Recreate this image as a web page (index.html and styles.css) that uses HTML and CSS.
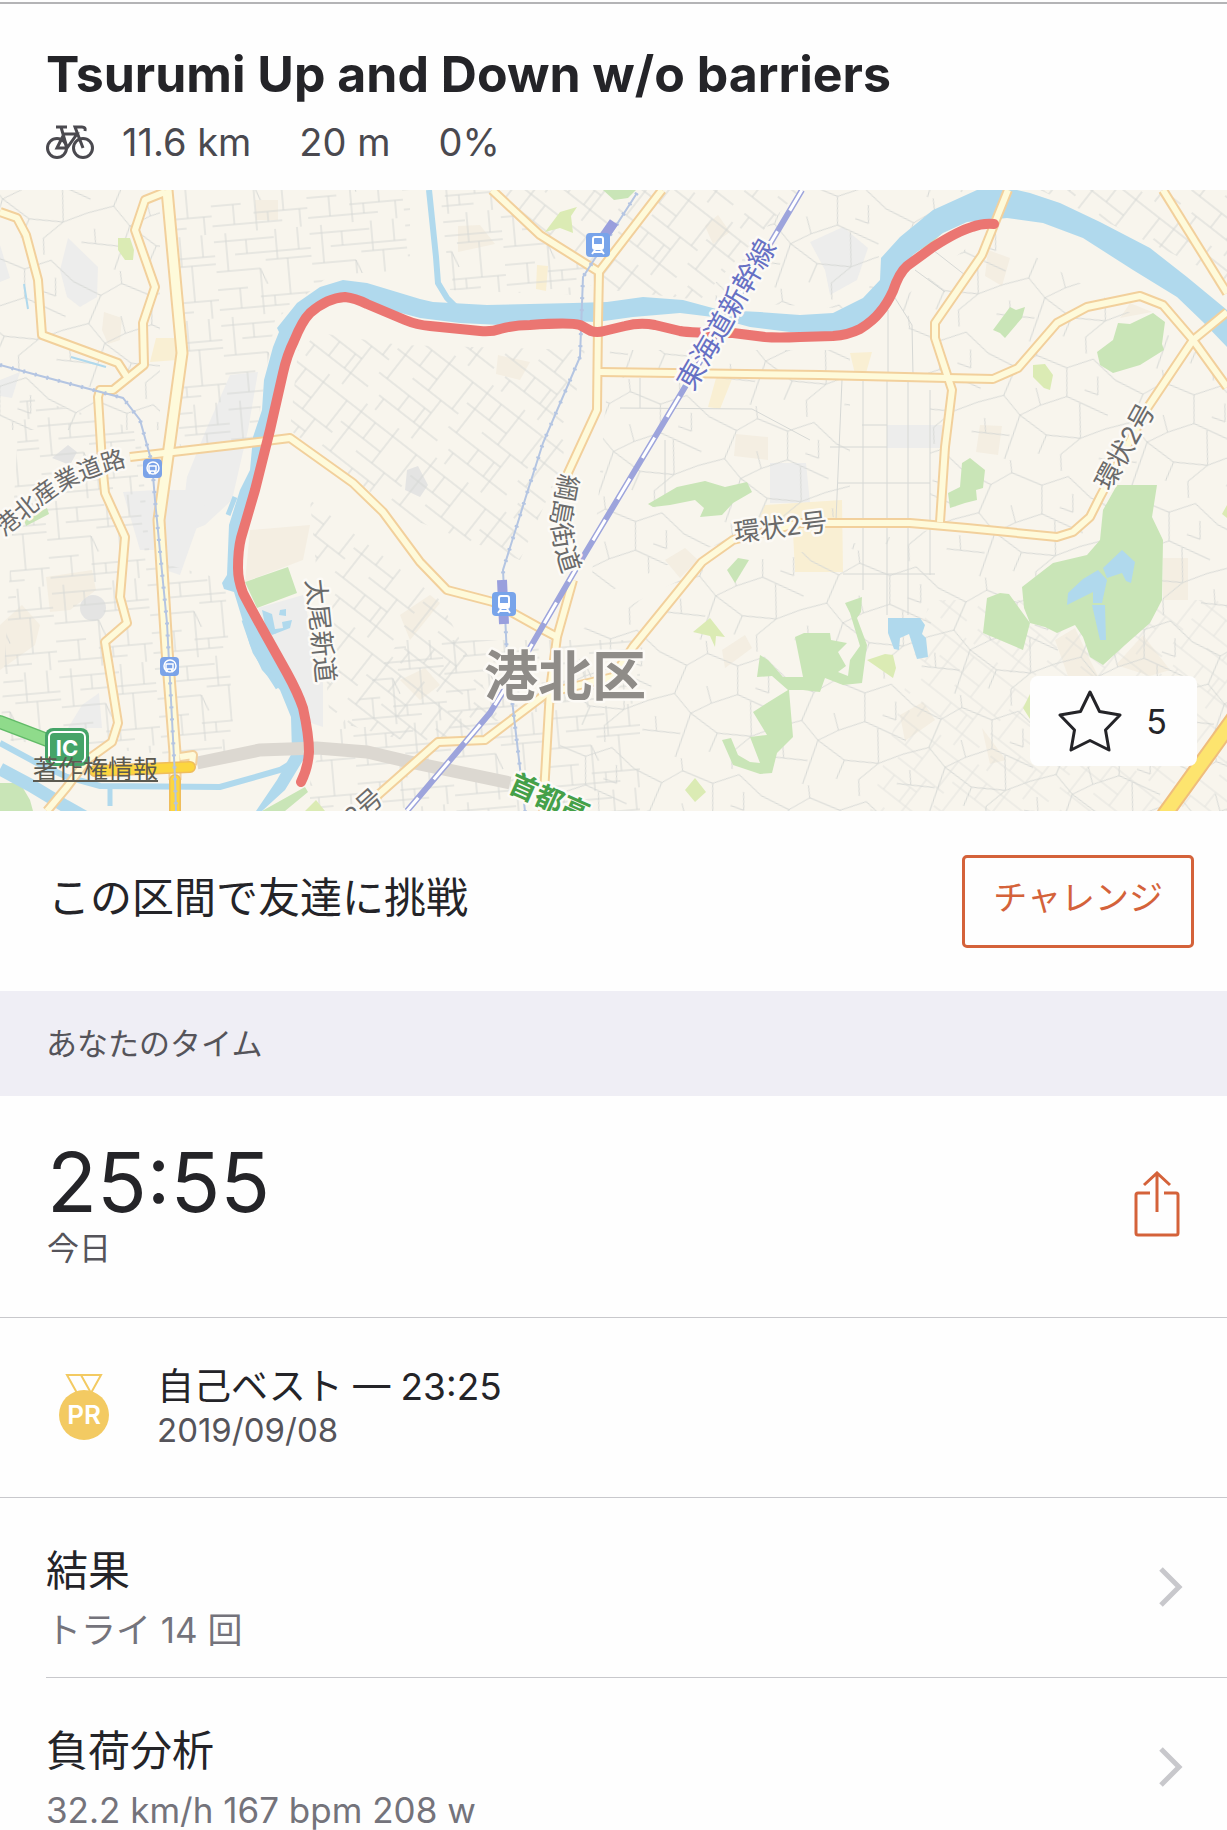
FILE: index.html
```html
<!DOCTYPE html>
<html lang="ja">
<head>
    <meta charset="UTF-8">
    <meta name="viewport" content="width=device-width, initial-scale=1">
    <title>Tsurumi Up and Down w/o barriers</title>
    <link rel="stylesheet" href="styles.css">
</head>
<body>
    <header class="segment-header">
        <h1>Tsurumi Up and Down w/o barriers</h1>
        <div class="stats">
            <svg class="bike-icon" viewBox="0 0 48 34" aria-hidden="true">
                <circle cx="11" cy="23" r="9.5"/>
                <circle cx="37" cy="23" r="9.5"/>
                <path d="M11 23 L18 9 H31 L21 23 Z M21 23 L15 2 M10 2 H21 M37 23 L29 2 H36 Q40 2 39 6"/>
            </svg>
            <span>11.6 km</span>
            <span>20 m</span>
            <span>0%</span>
        </div>
    </header>

    <div class="map">
        <svg class="map-canvas" viewBox="0 190 1227 621" preserveAspectRatio="xMidYMid slice" role="img" aria-label="区間の地図">
            <defs>
                <!-- 細い道路の模様 -->
                <pattern id="blocks" width="96" height="84" patternUnits="userSpaceOnUse" patternTransform="rotate(-5)">
                    <path class="street" d="M0 8 H60 M20 22 H96 M0 38 H44 L50 54 M50 30 H96 M0 56 H30 M42 66 H96 M0 76 H70 M12 0 V38 M32 8 V22 M44 38 V84 M62 0 V30 M72 30 V66 M84 0 V22 M88 66 V84 M22 56 V76 M56 66 V76"/>
                </pattern>
                <pattern id="slant" width="88" height="92" patternUnits="userSpaceOnUse" patternTransform="rotate(38)">
                    <path class="street" d="M0 10 H88 M0 30 H50 M30 44 H88 M0 60 H66 M14 78 H88 M10 0 V60 M28 10 V30 M50 0 V44 M66 44 V92 M80 10 V44 M38 60 V78 M20 78 V92 M58 60 V78"/>
                </pattern>
                <pattern id="hills" width="130" height="120" patternUnits="userSpaceOnUse" patternTransform="rotate(12)">
                    <path class="street" d="M0 20 L30 28 L48 12 L80 18 L104 4 L130 20 M30 28 L24 58 L44 74 L38 120 M0 70 L24 58 M80 18 L86 46 L62 60 L44 74 M86 46 L130 56 M100 50 L108 84 L92 104 L96 120 M44 74 L74 88 L108 84 M108 84 L130 70 M74 88 L70 108 M0 100 L38 96 M48 12 L44 0 M62 60 L54 44 M10 84 L14 98 M112 20 L116 38 L102 36"/>
                </pattern>
                <g id="train">
                    <rect width="24" height="24" rx="4" fill="#78a4ea"/>
                    <rect x="7" y="4" width="10" height="12" rx="2" fill="none" stroke="#fff" stroke-width="2"/>
                    <path d="M7 11 H17 V15 H7 Z" fill="#fff"/>
                    <path d="M6 21 L9 17 M18 21 L15 17 M8 19 H16" stroke="#fff" stroke-width="2" fill="none"/>
                </g>
                <g id="metro">
                    <rect width="19" height="19" rx="4" fill="#7ba3e8"/>
                    <circle cx="10" cy="9" r="6" fill="none" stroke="#fff" stroke-width="1.5"/>
                    <path d="M6 7 H13 V12 H6 Z M6 15 L8 12 M13 15 L11 12" stroke="#fff" stroke-width="1.5" fill="none"/>
                </g>
            </defs>

            <rect y="190" width="1227" height="621" fill="#f8f5ed"/>

            <g fill="#ededec">
                <path d="M68 238 L98 267 97 297 80 307 67 297 60 270Z"/>
                <path d="M0 245 L10 278 0 282Z M0 380 L20 372 12 398 0 396Z"/>
                <path d="M230 375 L258 372 248 430 232 500 205 525 180 535 187 477 206 430Z"/>
                <path d="M123 492 L156 490 154 550 140 550Z M164 490 H210 L180 575 165 570Z"/>
                <path d="M258 608 L303 595 323 683 323 727 308 722Z"/>
                <path d="M810 242 L843 227 868 248 857 280 830 295 825 270Z"/>
                <path d="M887 425 H942 V448 H887Z M770 463 H806 L810 503 H770Z"/>
                <path d="M82 705 L99 693 102 728 68 728Z"/>
            </g>
            <g fill="#e4e4e3">
                <circle cx="93" cy="608" r="13"/>
                <path d="M407 470 L418 466 428 485 420 497 405 490Z M52 458 L68 445 77 452 70 465Z"/>
            </g>
            <g fill="#f4eee2">
                <path d="M255 200 H278 V220 H256Z M104 312 L122 318 120 340 108 344 102 330Z"/>
                <path d="M458 226 L480 225 495 244 458 252Z M705 226 L718 215 730 232 713 244Z"/>
                <path d="M498 355 L530 362 520 380 496 374Z M736 434 L768 437 V460 L734 456Z"/>
                <path d="M988 250 L1010 258 1002 286 985 276Z M1120 318 L1130 303 1152 312Z"/>
                <path d="M980 425 L1002 426 998 455 976 452Z M250 530 L310 525 303 560 245 582Z"/>
                <path d="M46 577 L92 570 96 590 70 610 50 612Z M0 625 L22 605 40 625 35 645 0 670Z"/>
                <path d="M400 615 L430 595 440 603 410 640Z M400 680 L425 668 440 685 420 700Z"/>
                <path d="M665 560 L685 548 698 560 680 578Z M722 650 L745 635 752 648 725 668Z"/>
                <path d="M1055 640 L1075 628 1090 660 1098 676 1068 676Z M1116 665 L1143 635 1170 670 1150 676Z"/>
                <path d="M900 715 L923 702 935 720 905 741Z M982 728 L1006 760 990 764Z M1163 558 H1188 V600 H1163Z"/>
            </g>
            <path fill="#f9efd3" d="M156 338 H177 V360 L150 362Z M537 265 L548 266 546 291 536 289Z M716 378 L732 379 720 409 708 407Z M850 353 L872 352 866 373 855 374Z M765 505 L842 500 843 572 795 572 793 532 755 528Z"/>

            <g>
                <path fill="url(#blocks)" d="M170 190 H410 V270 L330 275 275 320 255 440 180 450Z"/>
                <path fill="url(#blocks)" d="M20 395 L140 430 150 560 225 580 235 760 0 740Z"/>
                <path fill="url(#slant)" d="M300 330 L400 345 585 350 560 470 520 560 400 515 290 430Z"/>
                <path fill="url(#slant)" d="M310 500 L440 600 500 720 420 745 330 720Z"/>
                <path fill="url(#hills)" d="M0 190 H160 V430 H0Z"/>
                <path fill="url(#blocks)" d="M440 190 L490 190 600 280 575 295 450 290Z"/>
                <path fill="url(#slant)" d="M490 190 H800 L700 300 610 290Z"/>
                <path fill="url(#hills)" d="M800 190 H970 L880 250 870 310 700 300Z"/>
                <path fill="url(#hills)" d="M610 350 L850 350 850 520 820 515 700 550 590 600Z"/>
                <path fill="url(#hills)" d="M900 300 L990 230 1227 370 V811 H560 V640 L700 570 930 530 930 400Z"/>
                <path fill="url(#slant)" d="M930 600 H1227 V811 H870Z" opacity=".6"/>
                <path fill="url(#slant)" d="M1040 190 H1227 V280Z"/>
                <path fill="url(#blocks)" d="M400 640 H640 V811 H310 V770Z"/>
            </g>
            <path class="street" d="M842 380 L836 520 M863 380 V590 M887 375 V615 M908 380 V615 M930 390 V575 M862 425 H887 M830 447 H887 M838 483 H930 M843 574 H935 M620 408 L752 409 810 440 M640 378 V408 M665 440 V500 M890 290 L912 325 913 375 M915 270 L945 292 M933 250 L965 275 M888 310 V372"/>

            <g class="park">
                <path d="M1118 323 L1130 324 1153 313 1165 322 1162 344 1164 350 1140 365 1113 373 1100 365 1097 352 1113 340Z"/>
                <path d="M1010 307 L1016 310 1025 307 1022 318 1005 338 1000 333 993 330Z"/>
                <path d="M970 458 L985 470 983 488 976 490 977 500 965 503 950 508 948 493 960 487 962 463Z"/>
                <path d="M1117 485 H1157 L1152 517 1163 540 1162 600 1150 623 1125 645 1103 665 1090 657 1083 637 1075 625 1057 633 1045 627 1030 623 1024 608 1022 587 1053 563 1087 555 1100 540 1103 510Z"/>
                <path d="M987 598 L1000 593 1009 594 1030 623 1023 650 995 638 983 633Z"/>
                <path d="M648 504 L677 487 705 481 725 487 747 482 752 492 733 503 722 515 700 517 704 508 695 500 670 505 653 507Z"/>
                <path d="M738 558 L749 560 735 583 727 570Z"/>
                <path d="M795 637 L804 633 830 633 831 640 847 643 838 652 846 666 838 672 848 676 850 660 860 646 850 613 845 603 862 597 861 612 857 618 867 645 862 683 843 685 825 678 820 692 803 690 789 690 793 737 777 753 772 773 760 774 733 765 722 740 731 738 738 755 750 762 760 763 750 737 767 735 753 712 767 703 788 690 772 676 757 677 760 655 768 660 783 677 803 677Z"/>
                <path d="M603 190 H636 L628 198 614 200Z M245 582 L288 567 297 593 257 608Z"/>
                <path d="M305 787 L308 792 285 811 262 811Z M0 783 H20 L30 800 33 811 H0Z M24 520 L47 508 49 514 26 526Z M913 253 L930 238 942 233 930 245Z"/>
            </g>
            <path class="meadow" d="M118 238 H130 L134 250 133 260 H125 L118 250Z M545 232 L560 212 577 207 571 216 573 233 560 228Z M1033 365 L1045 364 1053 375 1050 390 1044 388 1033 377Z M710 618 L725 637 716 636 715 647 710 636 693 632Z M695 778 L706 792 695 802 685 790Z M867 660 L885 654 893 655 896 668 893 678Z M1032 690 L1023 708 1030 719Z M1227 505 L1222 514 1227 518Z M316 800 L325 811 305 811Z"/>

            <!-- 川と池 -->
            <g class="water">
                <path d="M977 190 H1017 L1030 193 1060 203 1100 222 1150 248 1187 277 1227 310 V347 L1203 322 1177 297 1133 270 1083 238 1043 223 1007 218 967 222 943 233 913 255 900 273 887 303 867 323 843 333 790 332 750 327 713 317 680 313 633 317 597 322 533 320 500 325 460 323 420 318 367 304 347 296 325 301 307 318 292 343 280 380 268 430 253 490 240 540 239 570 245 596 265 633 287 673 302 707 305 757 285 790 262 811 H256 L277 780 292 753 291 717 280 690 262 670 250 645 241 615 234 592 224 589 222 583 227 575 229 525 240 490 250 470 253 437 262 410 264 380 273 347 279 332 277 328 297 303 320 287 343 280 367 283 420 299 433 302 487 305 573 303 607 302 643 297 683 300 720 310 760 312 800 315 833 313 863 298 880 280 881 258 900 237 933 210Z"/>
                <path d="M1122 550 L1135 562 1131 583 1126 581 1122 573 1107 578 1103 568Z M1098 570 L1107 580 1102 603 H1093 V592 L1067 605 1068 593 1083 579Z M1092 605 H1105 L1106 640 H1100Z"/>
                <path d="M888 618 H920 L925 625 922 634 926 638 928 657 917 659 909 634 900 638 899 650 894 649 888 633Z"/>
                <path d="M262 610 L272 614 276 634 266 630Z M280 610 L286 609 286 616 279 615Z M282 622 L292 620 290 628 272 635 268 630 283 628Z"/>
            </g>
            <g class="stream">
                <path stroke-width="6" d="M429 190 L436 257 438 283 447 298 460 311"/>
                <path stroke-width="6" d="M0 743 L35 762 67 777 100 786 220 787 280 770 300 758"/>
                <path stroke-width="13" d="M0 769 L30 785 65 806 90 820"/>
                <path stroke-width="5" d="M110 787 V806 M228 515 L235 497 M244 620 L255 652 278 688"/>
                <path stroke-width="2" d="M24 284 L28 309 M71 357 L106 367"/>
            </g>

            <path class="covered" d="M197 763 L260 750 317 748 367 752 410 762 510 783"/>

            <!-- 幹線道路 -->
            <g class="road-case">
                <path d="M0 212 L17 218 26 235 38 280 42 335 118 363 127 377"/>
                <path d="M165 192 L145 200 135 230 155 287 143 323 144 365 113 390 100 390 98 397 102 463 105 493 125 537 120 597 127 623 105 642 118 723 112 742 87 760 67 787 47 811"/>
                <path d="M130 457 L233 445 290 438 353 483 383 512 420 562 447 590 493 602 540 628 557 637"/>
                <path d="M492 190 L540 235 599 272 662 190 M599 272 L598 323 597 410 567 475"/>
                <path d="M573 580 L557 637 550 690 543 811"/>
                <path d="M600 372 L820 375 947 378 993 379 1018 368 1057 323 1087 307 1140 296 1163 305 1193 340 1227 387"/>
                <path d="M1008 190 L982 255 935 323 935 338 952 390 945 447 940 522"/>
                <path d="M1163 190 L1227 293"/>
                <path d="M1227 312 L1193 340 1148 407 1100 497 1090 517 1073 532 1057 537 967 528 910 523 800 523 733 540 702 562 633 647 613 677 547 693 485 740 438 742 360 811"/>
                <path class="wide" d="M167 190 L182 353 167 463 159 520 167 650 175 753 V780"/>
                <path d="M180 757 L193 755 192 765"/>
            </g>
            <g class="road-fill">
                <path d="M0 212 L17 218 26 235 38 280 42 335 118 363 127 377"/>
                <path d="M165 192 L145 200 135 230 155 287 143 323 144 365 113 390 100 390 98 397 102 463 105 493 125 537 120 597 127 623 105 642 118 723 112 742 87 760 67 787 47 811"/>
                <path d="M130 457 L233 445 290 438 353 483 383 512 420 562 447 590 493 602 540 628 557 637"/>
                <path d="M492 190 L540 235 599 272 662 190 M599 272 L598 323 597 410 567 475"/>
                <path d="M573 580 L557 637 550 690 543 811"/>
                <path d="M600 372 L820 375 947 378 993 379 1018 368 1057 323 1087 307 1140 296 1163 305 1193 340 1227 387"/>
                <path d="M1008 190 L982 255 935 323 935 338 952 390 945 447 940 522"/>
                <path d="M1163 190 L1227 293"/>
                <path d="M1227 312 L1193 340 1148 407 1100 497 1090 517 1073 532 1057 537 967 528 910 523 800 523 733 540 702 562 633 647 613 677 547 693 485 740 438 742 360 811"/>
                <path class="wide" d="M167 190 L182 353 167 463 159 520 167 650 175 753 V780"/>
                <path d="M180 757 L193 755 192 765"/>
            </g>
            <g fill="none" stroke-linecap="round">
                <path d="M1235 717 L1165 814" stroke="#efbd7c" stroke-width="17"/>
                <path d="M1235 717 L1165 814" stroke="#fde46e" stroke-width="13"/>
                <path d="M95 771 L190 767 M175 780 V815" stroke="#efbd5c" stroke-width="12"/>
                <path d="M95 771 L190 767 M175 780 V815" stroke="#fcd63f" stroke-width="9"/>
                <path d="M0 722 L55 743" stroke="#62bb68" stroke-width="14"/>
                <path d="M0 722 L55 743" stroke="#8fdb8b" stroke-width="11"/>
            </g>

            <!-- 鉄道 -->
            <g class="rail">
                <path d="M0 365 L37 375 123 398 140 420 152 463 155 500 167 623 175 777 176 811"/>
                <path d="M637 193 L583 277 580 357 543 443 528 490 503 570 507 657 525 811"/>
            </g>
            <g class="rail-ties">
                <path d="M0 365 L37 375 123 398 140 420 152 463 155 500 167 623 175 777 176 811"/>
                <path d="M637 193 L583 277 580 357 543 443 528 490 503 570 507 657 525 811"/>
            </g>
            <path d="M614 222 L600 242 M502 580 L504 624" stroke="#999fdd" stroke-width="10" fill="none"/>
            <path class="shinkansen" d="M802 190 L685 387 622 492 580 562 527 653 490 713 407 811"/>
            <path class="shinkansen-dash" d="M802 190 L685 387 622 492 580 562 527 653 490 713 407 811"/>

            <path class="route" d="M301 782 Q308 768 309 752 Q309 735 303 708 Q298 693 287 673 L263 630 Q248 603 243 593 Q238 580 238 568 Q238 550 241 538 L255 490 270 430 283 373 Q287 355 294 341 Q302 321 310 313 Q327 298 345 297 Q355 298 367 304 L405 320 Q417 325 430 326 L480 331 Q492 332 500 329 Q515 325 530 325 Q570 322 580 325 L591 331 Q597 333 604 331 L625 326 Q640 322 655 325 L680 331 Q690 333 733 333 L765 337 Q777 338 800 337 L833 336 Q848 335 860 329 Q873 321 880 312 Q887 304 893 291 Q899 273 907 266 L933 247 Q958 231 972 227 Q982 223 994 224"/>

            <use href="#metro" x="143" y="459"/>
            <use href="#metro" x="160" y="657"/>
            <use href="#train" x="586" y="233"/>
            <use href="#train" x="492" y="592"/>

            <g class="ic">
                <rect x="45" y="728" width="44" height="38" rx="8" fill="#45a468"/>
                <rect x="49" y="732" width="36" height="30" rx="5" fill="none" stroke="#fff" stroke-width="2"/>
                <text x="67" y="756" text-anchor="middle">IC</text>
            </g>

            <path id="kohoku-road" d="M4 537 L50 499 Q80 477 134 464" fill="none"/>
            <path id="tsunashima-road" d="M560 473 L552 515 Q551 548 571 592" fill="none"/>
            <g class="label">
                <text class="small"><textPath href="#kohoku-road">港北産業道路</textPath></text>
                <text><textPath href="#tsunashima-road">綱島街道</textPath></text>
                <text transform="translate(1110 492) rotate(-61)">環状2号</text>
                <text transform="translate(735 542) rotate(-7)">環状2号</text>
                <text transform="translate(306 580) rotate(84)">太尾新道</text>
                <text transform="translate(354 828) rotate(-42)">2号</text>
            </g>
            <text class="label rail-label" transform="translate(693 392) rotate(-60)">東海道新幹線</text>
            <text class="label highway-label" transform="translate(507 791) rotate(24)">首都高</text>
            <text class="label ward-label" x="565" y="696" text-anchor="middle">港北区</text>
        </svg>
        <a class="copyright" href="#copyright">著作権情報</a>
        <button class="favorite" type="button" aria-label="お気に入り 5">
            <svg class="star-icon" viewBox="0 0 64 62" aria-hidden="true">
                <path d="M32 2 L41.500 21.500 L62 25 L47.500 40 L51 60 L32 50.500 L13 60 L16.500 40 L2 25 L22.500 21.500 Z"/>
            </svg>
            <span>5</span>
        </button>
    </div>

    <section class="challenge">
        <p>この区間で友達に挑戦</p>
        <button class="challenge-button" type="button">チャレンジ</button>
    </section>

    <h2 class="section-title">あなたのタイム</h2>

    <section class="time-row">
        <div>
            <p class="time">25:55</p>
            <p class="day">今日</p>
        </div>
        <button class="share" type="button" aria-label="共有">
            <svg viewBox="0 0 46 66" aria-hidden="true">
                <path d="M16 22 H4 Q2 22 2 24 V62 Q2 64 4 64 H42 Q44 64 44 62 V24 Q44 22 42 22 H30 M23 41 V3 M10 14 L23 2 L36 14"/>
            </svg>
        </button>
    </section>

    <section class="best-row">
        <svg class="medal" viewBox="0 0 50 68" aria-hidden="true">
            <path d="M8 2 H42 L32 20 H18 Z M22 2 L32 20" fill="none" stroke="#f3ca62" stroke-width="2"/>
            <circle cx="25" cy="42" r="25" fill="#f3ca62"/>
            <text x="25" y="51" text-anchor="middle">PR</text>
        </svg>
        <div>
            <p class="best">自己ベスト — 23:25</p>
            <p class="date">2019/09/08</p>
        </div>
    </section>

    <nav class="links">
        <a href="#results">
            <span class="link-text">
                <span class="link-title">結果</span>
                <span class="link-sub">トライ 14 回</span>
            </span>
            <svg class="chevron" viewBox="0 0 24 40" aria-hidden="true"><path d="M2 2 L20 20 L2 38"/></svg>
        </a>
        <a href="#effort">
            <span class="link-text">
                <span class="link-title">負荷分析</span>
                <span class="link-sub">32.2 km/h 167 bpm 208 w</span>
            </span>
            <svg class="chevron" viewBox="0 0 24 40" aria-hidden="true"><path d="M2 2 L20 20 L2 38"/></svg>
        </a>
    </nav>
</body>
</html>
```
FILE: styles.css
```css
* {
    box-sizing: border-box;
}
body {
    margin: 0;
    background-color: #fefefe;
    color: #242428;
    font-family: Inter, "Noto Sans CJK JP", sans-serif;
    font-weight: 400;
}
p, h1, h2 {
    margin: 0;
}
button {
    font: inherit;
    cursor: pointer;
}
svg {
    display: block;
}

/* ヘッダー */
.segment-header {
    margin-top: 2px;
    border-top: 2px solid #b4b4b6;
    padding: 40px 46px 24px;
}
h1 {
    font-size: 50px;
    line-height: 60px;
    font-weight: 700;
}
.stats {
    display: flex;
    align-items: center;
    gap: 48px;
    margin-top: 14px;
    font-size: 38px;
    line-height: 48px;
    color: #4a494f;
}
.bike-icon {
    width: 48px;
    height: 34px;
    margin-right: -20px;
    fill: none;
    stroke: #4a494f;
    stroke-width: 3;
}

/* 地図 */
.map {
    position: relative;
    height: 621px;
    overflow: hidden;
}
.map-canvas {
    width: 100%;
    height: 100%;
}
.street {
    fill: none;
    stroke: #d6d8d5;
    stroke-width: 1;
}
.park {
    fill: #c9e5b7;
}
.meadow {
    fill: #dbebb4;
}
.water {
    fill: #b0d9ed;
}
.stream {
    fill: none;
    stroke: #b0d9ed;
}
.covered {
    fill: none;
    stroke: #dcd8d1;
    stroke-width: 13;
}
.road-case, .road-fill {
    fill: none;
    stroke-linejoin: round;
}
.road-case {
    stroke: #f2d09c;
    stroke-width: 10;
}
.road-fill {
    stroke: #fefada;
    stroke-width: 6;
}
.road-case .wide {
    stroke-width: 13;
}
.road-fill .wide {
    stroke-width: 9;
}
.rail, .rail-ties {
    fill: none;
    stroke: #b4c5e2;
    stroke-width: 2;
}
.rail-ties {
    stroke-width: 4;
    stroke-dasharray: 2 10;
}
.shinkansen {
    fill: none;
    stroke: #9da4dc;
    stroke-width: 6;
}
.shinkansen-dash {
    fill: none;
    stroke: #fff;
    stroke-width: 3;
    stroke-dasharray: 24 24;
}
.route {
    fill: none;
    stroke: #eb7672;
    stroke-width: 10;
    stroke-linecap: round;
    stroke-linejoin: round;
}
.ic text {
    font-size: 22px;
    font-weight: 700;
    fill: #fff;
}
.label {
    font-size: 26px;
    fill: #6a6a6a;
    stroke: #fcfaf6;
    stroke-width: 5;
    stroke-linejoin: round;
    paint-order: stroke;
}
.label .small {
    font-size: 24px;
}
.rail-label {
    font-size: 28px;
    fill: #6670c4;
}
.highway-label {
    font-size: 28px;
    font-weight: 700;
    fill: #45a049;
}
.ward-label {
    font-size: 54px;
    font-weight: 700;
    fill: #8f8c88;
}
.copyright {
    position: absolute;
    left: 33px;
    bottom: 24px;
    font-size: 25px;
    line-height: 36px;
    color: #5c5a50;
}
.favorite {
    position: absolute;
    right: 30px;
    bottom: 45px;
    display: flex;
    align-items: center;
    gap: 24px;
    height: 90px;
    padding: 0 30px 0 28px;
    border: none;
    border-radius: 8px;
    background-color: #fefefe;
    color: #242428;
    font-size: 34px;
}
.star-icon {
    width: 64px;
    height: 62px;
    fill: none;
    stroke: #242428;
    stroke-width: 3;
    stroke-linejoin: round;
}

/* チャレンジ */
.challenge {
    display: flex;
    align-items: center;
    justify-content: space-between;
    height: 180px;
    padding: 0 33px 0 48px;
    font-size: 42px;
    line-height: 56px;
}
.challenge p {
    padding-bottom: 6px;
}
.challenge-button {
    height: 93px;
    padding: 0 28px 6px;
    border: 3px solid #d4623a;
    border-radius: 5px;
    background-color: #fefefe;
    color: #d4623a;
    font-size: 34px;
}
.section-title {
    padding: 0 46px;
    background-color: #efeef5;
    color: #55545a;
    font-size: 31px;
    line-height: 105px;
    font-weight: 400;
}

/* タイム */
.time-row {
    display: flex;
    align-items: center;
    justify-content: space-between;
    height: 222px;
    padding: 0 47px 6px;
    border-bottom: 1px solid #c8c8cc;
}
.time {
    font-size: 82px;
    line-height: 90px;
}
.day {
    font-size: 32px;
    line-height: 42px;
    color: #55545a;
}
.share {
    padding: 0;
    border: none;
    background: none;
}
.share svg {
    width: 46px;
    height: 66px;
    fill: none;
    stroke: #d4623a;
    stroke-width: 3;
}
.best-row {
    display: flex;
    align-items: center;
    gap: 48px;
    height: 180px;
    padding: 0 59px 2px;
    border-bottom: 1px solid #c8c8cc;
}
.medal {
    width: 50px;
    height: 68px;
}
.medal text {
    font-size: 26px;
    font-weight: 600;
    fill: #fff;
}
.best {
    font-size: 37px;
    line-height: 46px;
}
.date {
    font-size: 33px;
    line-height: 40px;
    color: #55545a;
}

/* リンク一覧 */
.links {
    padding-left: 46px;
}
.links a {
    display: flex;
    justify-content: space-between;
    padding: 42px 44px 27px 0;
    color: inherit;
    text-decoration: none;
}
.links a + a {
    padding-bottom: 0;
    border-top: 1px solid #c8c8cc;
}
.link-text {
    display: flex;
    flex-direction: column;
    gap: 8px;
}
.link-title {
    font-size: 42px;
    line-height: 62px;
}
.link-sub {
    font-size: 35px;
    line-height: 40px;
    color: #74737b;
}
.chevron {
    width: 24px;
    height: 40px;
    margin-top: 27px;
    fill: none;
    stroke: #c8c8cc;
    stroke-width: 5;
}
```
